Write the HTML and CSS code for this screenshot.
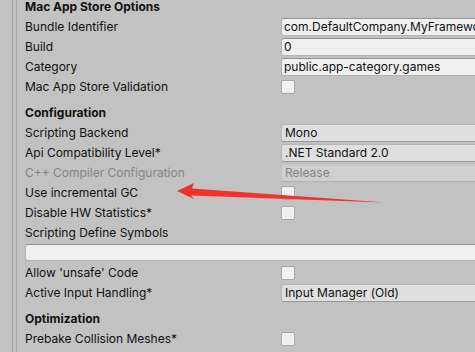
FILE: index.html
```html
<!DOCTYPE html>
<html lang="en">
<head>
    <meta charset="UTF-8">
    <title>Player Settings</title>
    <link rel="stylesheet" href="styles.css">
</head>
<body>

    <div class="inspector">
        <div class="gutter"></div>
        <div class="props">
            <div class="header">Mac App Store Options</div>
            <div class="row"><span class="label">Bundle Identifier</span><span class="field text">com.DefaultCompany.MyFramework</span></div>
            <div class="row"><span class="label">Build</span><span class="field text">0</span></div>
            <div class="row"><span class="label">Category</span><span class="field text">public.app-category.games</span></div>
            <div class="row"><span class="label">Mac App Store Validation</span><span class="check"></span></div>

            <div class="header">Configuration</div>
            <div class="row"><span class="label">Scripting Backend</span><span class="field popup">Mono</span></div>
            <div class="row"><span class="label">Api Compatibility Level*</span><span class="field popup">.NET Standard 2.0</span></div>
            <div class="row disabled"><span class="label">C++ Compiler Configuration</span><span class="field popup">Release</span></div>
            <div class="row"><span class="label">Use incremental GC</span><span class="check"></span></div>
            <div class="row"><span class="label">Disable HW Statistics*</span><span class="check"></span></div>
            <div class="row"><span class="label">Scripting Define Symbols</span></div>
            <div class="wide-field"></div>
            <div class="row"><span class="label">Allow 'unsafe' Code</span><span class="check"></span></div>
            <div class="row"><span class="label">Active Input Handling*</span><span class="field popup">Input Manager (Old)</span></div>

            <div class="header">Optimization</div>
            <div class="row"><span class="label">Prebake Collision Meshes*</span><span class="check"></span></div>
            <div class="row"><span class="label"></span><span class="check"></span></div>
        </div>
    </div>

    <!-- annotation arrow -->
    <svg class="arrow" width="475" height="352" viewBox="0 0 475 352">
        <polygon points="177,191 194,183 192,188.5 385,202.5 191,195.5 194,199" fill="#f2302c"/>
    </svg>

</body>
</html>
```

FILE: styles.css
```css
body {
    margin: 0;
    background-color: #c2c2c2;
    font-family: 'Inter', 'Liberation Sans', sans-serif;
    font-size: 12px;
    color: #111;
    overflow: hidden;
    width: 475px;
    height: 352px;
    position: relative;
}
.inspector {
    display: flex;
}
.gutter {
    width: 3px;
    margin-left: 12px;
    border-left: 1px solid #9c9c9c;
    border-right: 1px solid #ababab;
    flex-shrink: 0;
}
.props {
    padding-left: 8px;
    margin-top: -2px;
    width: 520px;
    flex-shrink: 0;
}
.header {
    font-weight: bold;
    height: 20px;
    line-height: 18px;
}
.header + .row {
    margin-top: 0;
}
.row + .header {
    margin-top: 6px;
}
.row {
    display: flex;
    height: 20px;
}
.label {
    width: 256px;
    line-height: 18px;
    white-space: nowrap;
    flex-shrink: 0;
}
.field {
    width: 240px;
    height: 18px;
    box-sizing: border-box;
    line-height: 16px;
    padding: 0 3px;
    border-radius: 3px;
    white-space: nowrap;
    overflow: hidden;
}
.text {
    background-color: #f0f0f0;
    border: 1px solid #b4b4b4;
    border-top-color: #939393;
    padding-left: 2px;
}
.popup {
    background-color: #dfdfdf;
    border: 1px solid #b8b8b8;
    border-bottom-color: #999;
}
.disabled {
    color: #858585;
}
.disabled .popup {
    background-color: #cfcfcf;
    border-color: #c4c4c4;
    border-bottom-color: #b0b0b0;
}
.check {
    width: 12px;
    height: 12px;
    margin-top: 2px;
    background-color: #f0f0f0;
    border: 1px solid #a9a9a9;
    border-radius: 2px;
}
.wide-field {
    height: 17px;
    margin-bottom: 3px;
    background-color: #f0f0f0;
    border-top: 1px solid #939393;
    border-bottom: 1px solid #b4b4b4;
    border-radius: 3px 0 0 3px;
    border-left: 1px solid #b4b4b4;
    box-sizing: border-box;
}
.arrow {
    position: absolute;
    left: 0;
    top: 0;
}
```
